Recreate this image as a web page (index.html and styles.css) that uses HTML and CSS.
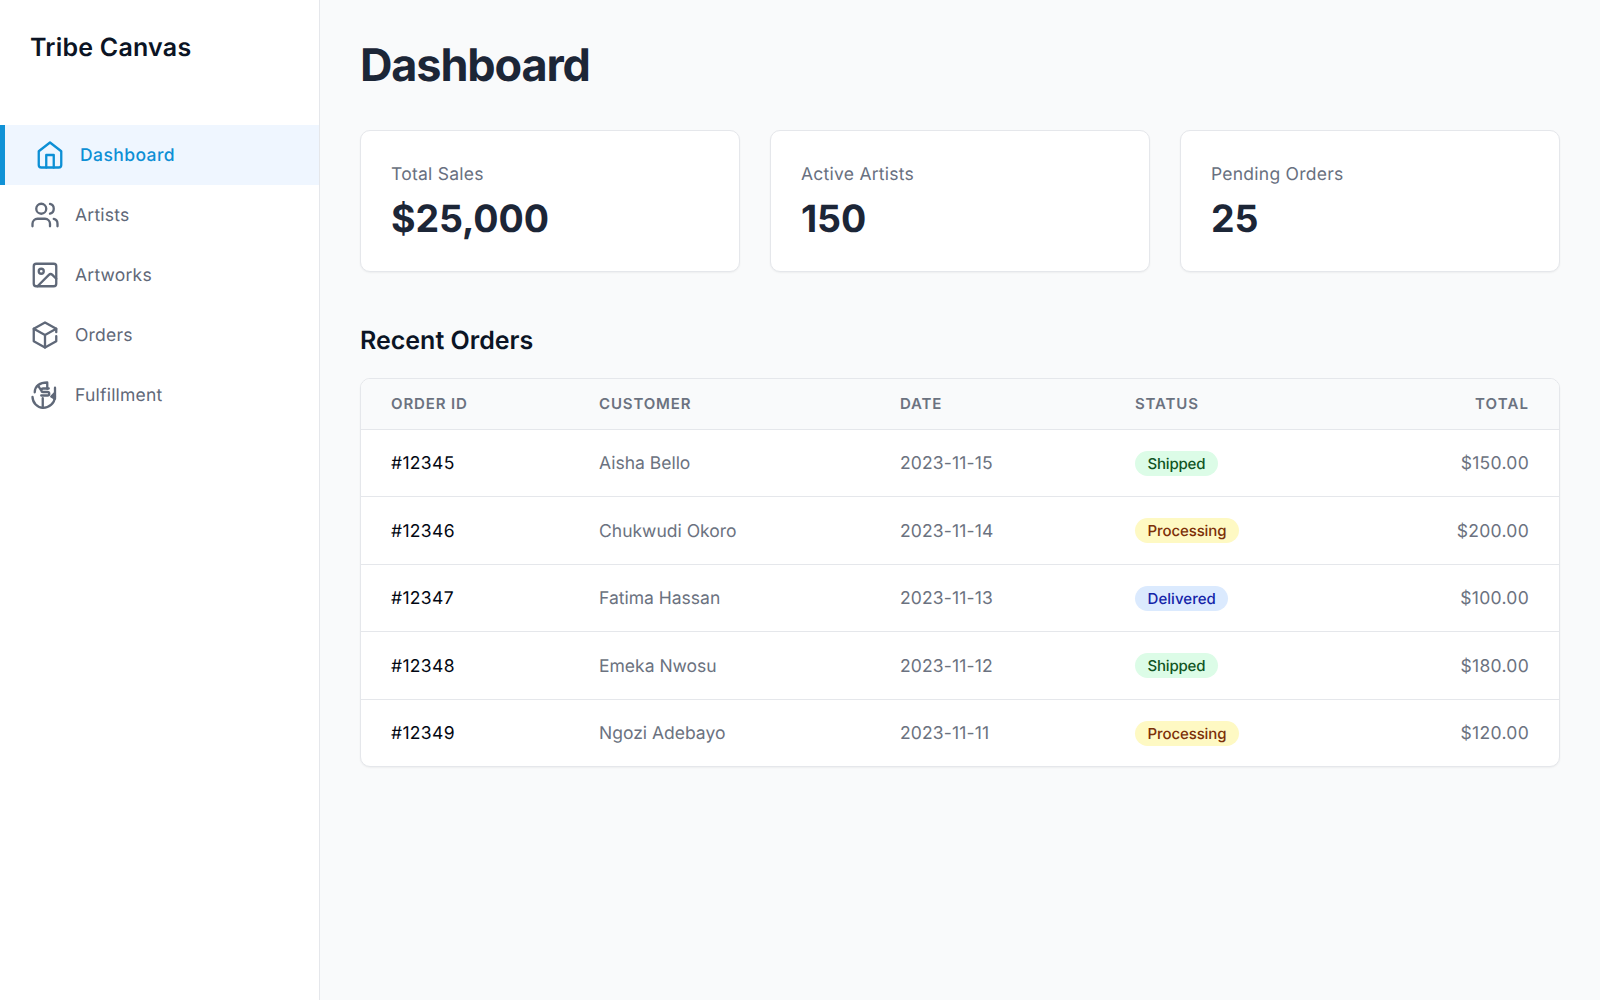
FILE: index.html
```html
<!DOCTYPE html>
<html lang="en">
<head>
<meta charset="utf-8">
<title>Tribe Canvas</title>
<link rel="stylesheet" href="styles.css">
</head>
<body>
<div class="app">
  <aside class="sidebar">
    <div class="brand">Tribe Canvas</div>
    <nav class="nav">
      <a class="nav-item active"><svg class="icon" viewBox="0 0 24 24"><path d="m3 9 9-7 9 7v11a2 2 0 0 1-2 2H5a2 2 0 0 1-2-2z"/><path d="M9 22V12h6v10"/></svg><span>Dashboard</span></a>
      <a class="nav-item"><svg class="icon" viewBox="0 0 24 24"><path d="M16 21v-2a4 4 0 0 0-4-4H6a4 4 0 0 0-4 4v2"/><circle cx="9" cy="7" r="4"/><path d="M22 21v-2a4 4 0 0 0-3-3.87M16 3.13a4 4 0 0 1 0 7.75"/></svg><span>Artists</span></a>
      <a class="nav-item"><svg class="icon" viewBox="0 0 24 24"><rect x="3" y="3" width="18" height="18" rx="2"/><circle cx="9" cy="9" r="2"/><path d="m21 15-3.086-3.086a2 2 0 0 0-2.828 0L6 21"/></svg><span>Artworks</span></a>
      <a class="nav-item"><svg class="icon" viewBox="0 0 24 24"><path d="M21 9.700V7l-9-5-9 5v10l9 5 9-5v-4"/><path d="m3 7 9 5 9-5M12 12v10"/></svg><span>Orders</span></a>
      <a class="nav-item"><svg class="icon" viewBox="0 0 24 24"><path d="M2 13.500a9 9 0 0 0 8.500 8.800 9.500 9.500 0 0 0 9.500-8.800V6.200M3.800 9.800c.2-5 4-7.800 10-7.800v5"/><path d="M6.500 4.500 8.700 8M15 6.800H10.500a1.400 1.400 0 0 0 0 2.800H14a1.400 1.400 0 0 1 0 2.800H9M10.200 14.500v7.800"/><path class="fill" d="M19.800 10.500 17 13.200l3 1.800z"/></svg><span>Fulfillment</span></a>
    </nav>
  </aside>
  <main class="main">
    <h1 class="title">Dashboard</h1>
    <section class="stats">
      <div class="card"><div class="label">Total Sales</div><div class="value">$25,000</div></div>
      <div class="card"><div class="label">Active Artists</div><div class="value">150</div></div>
      <div class="card"><div class="label">Pending Orders</div><div class="value">25</div></div>
    </section>
    <h2 class="subtitle">Recent Orders</h2>
    <div class="orders">
      <div class="row head"><span>Order ID</span><span>Customer</span><span>Date</span><span>Status</span><span class="total">Total</span></div>
      <div class="row"><span class="id">#12345</span><span>Aisha Bello</span><span class="date">2023-11-15</span><span><b class="badge shipped">Shipped</b></span><span class="total">$150.00</span></div>
      <div class="row"><span class="id">#12346</span><span>Chukwudi Okoro</span><span class="date">2023-11-14</span><span><b class="badge processing">Processing</b></span><span class="total">$200.00</span></div>
      <div class="row"><span class="id">#12347</span><span>Fatima Hassan</span><span class="date">2023-11-13</span><span><b class="badge delivered">Delivered</b></span><span class="total">$100.00</span></div>
      <div class="row"><span class="id">#12348</span><span>Emeka Nwosu</span><span class="date">2023-11-12</span><span><b class="badge shipped">Shipped</b></span><span class="total">$180.00</span></div>
      <div class="row"><span class="id">#12349</span><span>Ngozi Adebayo</span><span class="date">2023-11-11</span><span><b class="badge processing">Processing</b></span><span class="total">$120.00</span></div>
    </div>
  </main>
</div>
</body>
</html>
```
FILE: styles.css
```css
* { box-sizing: border-box; margin: 0; padding: 0; }
body { font-family: Inter, "Liberation Sans", sans-serif; font-size: 17.5px; line-height: 25px; color: #0b1424; background: #f9fafb; text-rendering: geometricPrecision; }
.app { display: flex; height: 1000px; }
.sidebar { width: 320px; background: #fff; border-right: 1px solid #e5e7eb; }
.brand { height: 125px; padding: 31px 30px 29px; font-size: 25px; line-height: 35px; font-weight: 600; letter-spacing: 0.22px; }
.nav-item { display: flex; align-items: center; gap: 15px; height: 60px; padding: 0 30px; color: #5f6878; letter-spacing: 0.22px; }
.nav-item.active { border-left: 5px solid #1192d6; background: #eff6ff; color: #0d8fd5; font-weight: 500; letter-spacing: 0.42px; }
.icon { width: 30px; height: 30px; fill: none; stroke: currentColor; stroke-width: 1.85; stroke-linecap: round; stroke-linejoin: round; }
.fill { fill: currentColor; }
.main { flex: 1; padding: 40px; }
.title { font-size: 45px; line-height: 50px; font-weight: 700; letter-spacing: -0.025em; color: #1c2637; margin-bottom: 40px; }
.stats { display: grid; grid-template-columns: repeat(3, 1fr); gap: 30px; margin-bottom: 52px; }
.card { height: 142px; padding: 31px 30px 29px; border: 1px solid #e5e7eb; border-radius: 10px; background: #fff; box-shadow: 0 1px 2px rgba(0, 0, 0, 0.05); }
.label { color: #687080; letter-spacing: 0.25px; }
.value { margin-top: 10px; font-size: 37.5px; line-height: 45px; font-weight: 700; letter-spacing: -0.1px; color: #1c2637; }
.subtitle { font-size: 25px; line-height: 35px; font-weight: 600; margin-bottom: 19px; }
.orders { border: 1px solid #e5e7eb; border-radius: 10px; background: #fff; overflow: hidden; box-shadow: 0 1px 2px rgba(0, 0, 0, 0.05); }
.row { display: grid; grid-template-columns: 208px 301px 235px 1fr 150px; align-items: center; height: 67.5px; padding: 2.2px 30px 0; border-top: 1px solid #e5e7eb; color: #6b7280; }
.row.head { height: 49.6px; padding: 0 30px 1px; border-top: 0; background: #f9fafb; font-size: 15px; font-weight: 600; letter-spacing: 0.85px; text-transform: uppercase; }
.id { color: #030712; letter-spacing: 0.33px; }
.date { letter-spacing: 0.16px; }
.total { text-align: right; letter-spacing: 0.3px; }
.head .total { letter-spacing: 1.1px; }
.badge { display: block; width: fit-content; margin-top: -1.6px; padding: 0 12.5px; border-radius: 13px; font-size: 15px; line-height: 25px; font-weight: 500; }
.shipped { background: #dcfce7; color: #0f5423; letter-spacing: -0.2px; }
.processing { background: #fef9c3; color: #7c3008; letter-spacing: -0.1px; }
.delivered { background: #dbeafe; color: #1324a8; letter-spacing: 0.05px; }
```
